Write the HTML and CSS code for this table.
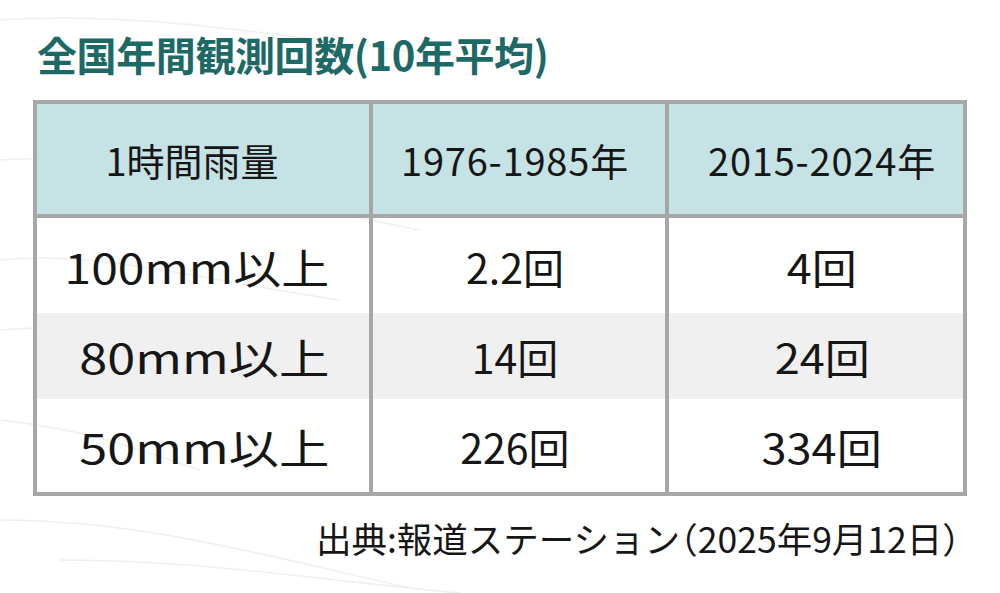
FILE: index.html
```html
<!DOCTYPE html>
<html lang="ja">
<head>
<meta charset="utf-8">
<link rel="stylesheet" href="styles.css">
</head>
<body>
<div class="page">
  <h1 class="title">全国年間観測回数(10年平均)</h1>
  <table class="stats">
    <colgroup>
      <col class="c1"><col class="c2"><col class="c3">
    </colgroup>
    <thead>
      <tr class="head"><th>1時間雨量</th><th>1976-1985年</th><th>2015-2024年</th></tr>
    </thead>
    <tbody>
      <tr class="r1"><td><span class="wide">100mm以上</span></td><td>2.2回</td><td><span class="wide3">4回</span></td></tr>
      <tr class="r2 alt"><td><span class="wide wider">80mm以上</span></td><td>14回</td><td><span class="wide3">24回</span></td></tr>
      <tr class="r3"><td><span class="wide wider">50mm以上</span></td><td>226回</td><td><span class="wide3">334回</span></td></tr>
    </tbody>
  </table>
  <p class="source">出典:報道ステーション（2025年9月12日）</p>
</div>
</body>
</html>
```
FILE: styles.css
```css
html, body {
  margin: 0;
  padding: 0;
  background: #ffffff;
}
body {
  width: 1000px;
  height: 593px;
  overflow: hidden;
  font-family: "Noto Sans CJK JP", "Noto Sans", sans-serif;
  color: #161616;
  background-color: #fff;
  background-image: url("data:image/svg+xml;utf8,<svg xmlns='http://www.w3.org/2000/svg' width='1000' height='593'><g fill='none' stroke='%23efefef' stroke-width='1.5'><path d='M0 160 C 120 150, 260 200, 420 230'/><path d='M0 260 C 100 250, 200 280, 340 300'/><path d='M0 330 C 120 320, 230 350, 360 370'/><path d='M0 420 C 90 430, 140 450, 200 470'/><path d='M0 520 C 150 520, 280 560, 420 590'/><path d='M60 560 C 200 560, 320 580, 460 593'/><path d='M0 20 C 150 10, 300 40, 480 60'/></g></svg>");
  background-repeat: no-repeat;
}
.page {
  width: 930px;
  margin-left: 33px;
  padding-top: 27px;
}
.title {
  margin: 0 0 19px 4px;
  font-size: 40px;
  line-height: 54px;
  font-weight: 700;
  color: #1d6965;
  letter-spacing: -0.4px;
}
.stats {
  width: 930px;
  border-collapse: collapse;
  table-layout: fixed;
  border: 4px solid #a7a7a7;
}
.c1 { width: 336px; }
.c2 { width: 296px; }
.c3 { width: 298px; }
.stats th, .stats td {
  border-left: 4px solid #a7a7a7;
  border-right: 4px solid #a7a7a7;
  text-align: center;
  padding: 0;
  vertical-align: middle;
}
.stats th {
  background: #c5e2e4;
  font-size: 38px;
  font-weight: 400;
  height: 110px;
  border-bottom: 4px solid #a7a7a7;
}
.stats th:first-child {
  padding-right: 22px;
}
.stats th:nth-child(2),
.stats th:nth-child(3) {
  letter-spacing: 0.8px;
}
.stats td {
  font-size: 41px;
  font-weight: 400;
}
.stats td:first-child {
  text-align: right;
  padding-right: 40px;
}
.stats th:nth-child(2),
.stats td:nth-child(2) {
  padding-right: 8px;
}
.stats th:nth-child(3),
.stats td:nth-child(3) {
  padding-left: 12px;
}
.wide {
  display: inline-block;
  transform-origin: right center;
  transform: scaleX(1.17);
}
.wide.wider {
  transform: scaleX(1.23);
}
.wide3 {
  display: inline-block;
  transform: scaleX(1.1);
}
.r1 td { height: 95px; }
.r2 td { height: 86px; }
.r3 td { height: 93px; }
.alt td { background: #f0f0f0; }
.source {
  margin: 21px 3px 0 0;
  text-align: right;
  font-size: 35.5px;
  line-height: 42px;
  color: #161616;
  font-feature-settings: "halt";
}
```
